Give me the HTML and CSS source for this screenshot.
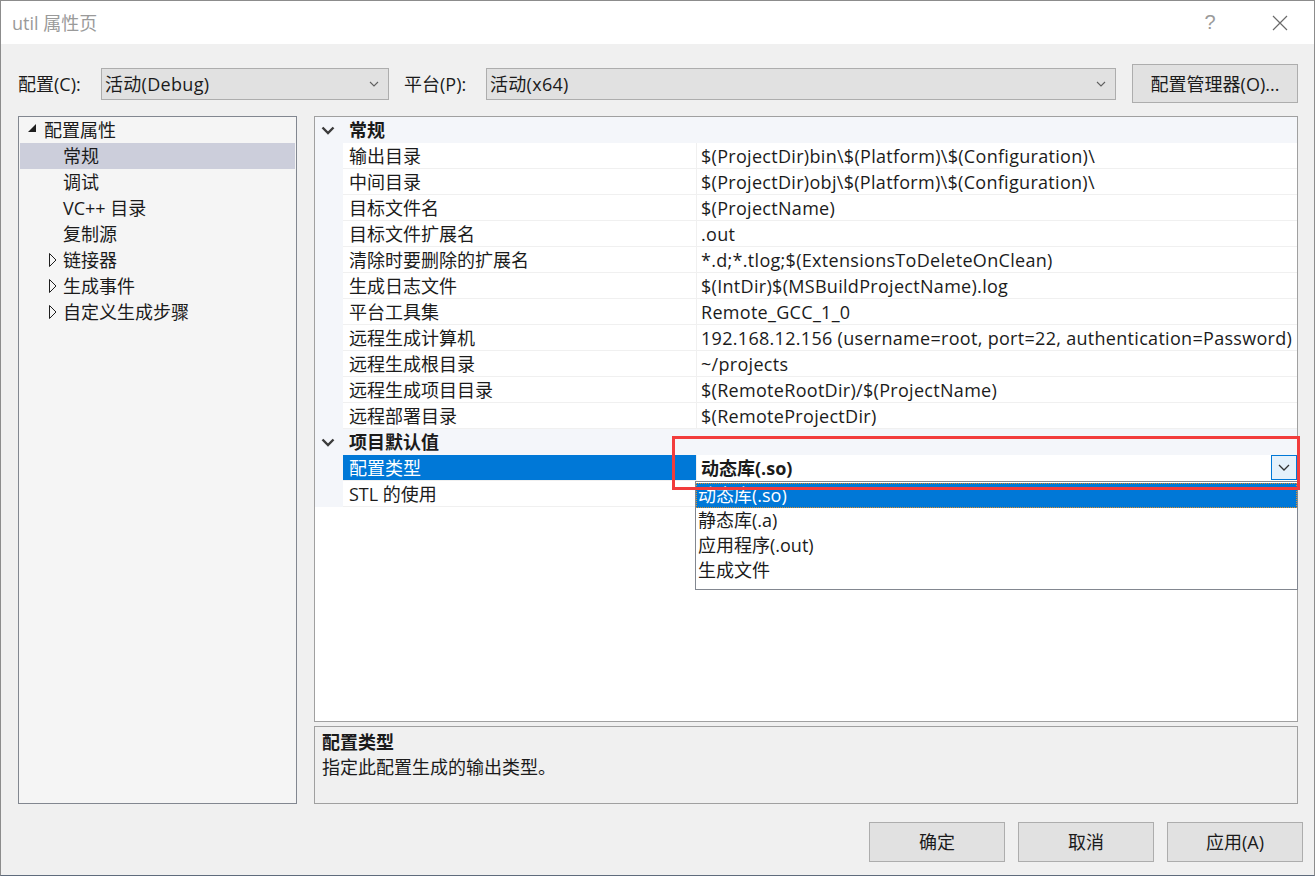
FILE: index.html
```html
<!DOCTYPE html>
<html lang="zh-CN">
<head>
  <meta charset="UTF-8" />
  <title>util 属性页</title>
  <link rel="stylesheet" href="styles.css">
</head>
<body>
  <div class="dialog">
    <div class="titlebar">
      <span class="title">util 属性页</span>
      <span class="tb-btn tb-help">?</span>
      <span class="tb-btn tb-close">
        <svg width="16" height="16" viewBox="0 0 16 16"><path d="M1 1 L15 15 M15 1 L1 15" stroke="#6a6a6a" stroke-width="1.2" fill="none"/></svg>
      </span>
    </div>

    <div class="content">
      <div class="config-row">
        <span class="lbl">配置(C):</span>
        <div class="combo combo-config">
          <span>活动(Debug)</span>
          <svg class="chev" width="10" height="6" viewBox="0 0 10 6"><path d="M1 1 L5 5 L9 1" stroke="#606060" stroke-width="1.1" fill="none"/></svg>
        </div>
        <span class="lbl lbl-platform">平台(P):</span>
        <div class="combo combo-platform">
          <span>活动(x64)</span>
          <svg class="chev" width="10" height="6" viewBox="0 0 10 6"><path d="M1 1 L5 5 L9 1" stroke="#606060" stroke-width="1.1" fill="none"/></svg>
        </div>
        <button class="btn btn-manager">配置管理器(O)...</button>
      </div>

      <div class="main">
        <div class="tree">
          <div class="node lvl0">
            <span class="exp"><svg width="9" height="9" viewBox="0 0 9 9"><path d="M8 0 L8 8 L0 8 Z" fill="#1e1e1e"/></svg></span>
            <span>配置属性</span>
          </div>
          <div class="node lvl1 selected"><span class="exp"></span><span>常规</span></div>
          <div class="node lvl1"><span class="exp"></span><span>调试</span></div>
          <div class="node lvl1"><span class="exp"></span><span>VC++ 目录</span></div>
          <div class="node lvl1"><span class="exp"></span><span>复制源</span></div>
          <div class="node lvl1">
            <span class="exp"><svg width="8" height="14" viewBox="0 0 8 14"><path d="M0.5 0.5 L7 7 L0.5 13.5 Z" fill="none" stroke="#1e1e1e" stroke-width="1"/></svg></span>
            <span>链接器</span>
          </div>
          <div class="node lvl1">
            <span class="exp"><svg width="8" height="14" viewBox="0 0 8 14"><path d="M0.5 0.5 L7 7 L0.5 13.5 Z" fill="none" stroke="#1e1e1e" stroke-width="1"/></svg></span>
            <span>生成事件</span>
          </div>
          <div class="node lvl1">
            <span class="exp"><svg width="8" height="14" viewBox="0 0 8 14"><path d="M0.5 0.5 L7 7 L0.5 13.5 Z" fill="none" stroke="#1e1e1e" stroke-width="1"/></svg></span>
            <span>自定义生成步骤</span>
          </div>
        </div>

        <div class="right">
          <div class="grid">
            <div class="cat">
              <span class="cat-chev"><svg width="14" height="9" viewBox="0 0 14 9"><path d="M1.5 1.5 L7 7 L12.5 1.5" stroke="#3c3c3c" stroke-width="2.4" fill="none"/></svg></span>
              <span>常规</span>
            </div>
            <div class="prop"><span class="gutter"></span><span class="name">输出目录</span><span class="value">$(ProjectDir)bin\$(Platform)\$(Configuration)\</span></div>
            <div class="prop"><span class="gutter"></span><span class="name">中间目录</span><span class="value">$(ProjectDir)obj\$(Platform)\$(Configuration)\</span></div>
            <div class="prop"><span class="gutter"></span><span class="name">目标文件名</span><span class="value">$(ProjectName)</span></div>
            <div class="prop"><span class="gutter"></span><span class="name">目标文件扩展名</span><span class="value">.out</span></div>
            <div class="prop"><span class="gutter"></span><span class="name">清除时要删除的扩展名</span><span class="value">*.d;*.tlog;$(ExtensionsToDeleteOnClean)</span></div>
            <div class="prop"><span class="gutter"></span><span class="name">生成日志文件</span><span class="value">$(IntDir)$(MSBuildProjectName).log</span></div>
            <div class="prop"><span class="gutter"></span><span class="name">平台工具集</span><span class="value">Remote_GCC_1_0</span></div>
            <div class="prop"><span class="gutter"></span><span class="name">远程生成计算机</span><span class="value">192.168.12.156 (username=root, port=22, authentication=Password)</span></div>
            <div class="prop"><span class="gutter"></span><span class="name">远程生成根目录</span><span class="value">~/projects</span></div>
            <div class="prop"><span class="gutter"></span><span class="name">远程生成项目目录</span><span class="value">$(RemoteRootDir)/$(ProjectName)</span></div>
            <div class="prop"><span class="gutter"></span><span class="name">远程部署目录</span><span class="value">$(RemoteProjectDir)</span></div>

            <div class="cat">
              <span class="cat-chev"><svg width="14" height="9" viewBox="0 0 14 9"><path d="M1.5 1.5 L7 7 L12.5 1.5" stroke="#3c3c3c" stroke-width="2.4" fill="none"/></svg></span>
              <span>项目默认值</span>
            </div>
            <div class="prop selected">
              <span class="gutter"></span>
              <span class="name">配置类型</span>
              <span class="value editing">
                <span class="edit-text">动态库(.so)</span>
                <span class="drop-btn"><svg width="12" height="7" viewBox="0 0 12 7"><path d="M1 1 L6 6 L11 1" stroke="#333" stroke-width="1.3" fill="none"/></svg></span>
                <div class="listbox">
                  <div class="opt active">动态库(.so)</div>
                  <div class="opt">静态库(.a)</div>
                  <div class="opt">应用程序(.out)</div>
                  <div class="opt">生成文件</div>
                </div>
              </span>
            </div>
            <div class="prop"><span class="gutter"></span><span class="name">STL 的使用</span><span class="value"></span></div>
          </div>

          <div class="desc">
            <div class="desc-title">配置类型</div>
            <div class="desc-text">指定此配置生成的输出类型。</div>
          </div>
        </div>
      </div>

      <div class="footer">
        <button class="btn">确定</button>
        <button class="btn">取消</button>
        <button class="btn">应用(A)</button>
      </div>
    </div>

    <div class="highlight-box"></div>
  </div>
</body>
</html>
```

FILE: styles.css
```css
* {
  margin: 0;
  padding: 0;
  box-sizing: border-box;
}

body {
  background: #f0f0f0;
  font-family: "Open Sans", "Noto Sans CJK SC", sans-serif;
  font-size: 18px;
  color: #1b1b1b;
}

.dialog {
  position: relative;
  width: 1315px;
  height: 876px;
  border: 1px solid #8c8c8c;
  border-bottom-color: #5f6b7c;
  background: #f0f0f0;
  display: flex;
  flex-direction: column;
}

/* title bar */
.titlebar {
  height: 43px;
  background: #fff;
  display: flex;
  align-items: center;
  padding-left: 11px;
}

.title {
  flex: 1;
  color: #9a9a9a;
  line-height: 24px;
}

.tb-btn {
  width: 68px;
  height: 43px;
  display: flex;
  align-items: center;
  justify-content: center;
}

.tb-help {
  margin-right: 2px;
  color: #9a9a9a;
  font-family: "Liberation Sans", sans-serif;
  font-weight: 300;
  font-size: 20px;
}

/* content */
.content {
  flex: 1;
  padding: 20px 16px 13px 17px;
  display: flex;
  flex-direction: column;
}

.config-row {
  height: 39px;
  display: flex;
  align-items: center;
}

.lbl {
  width: 83px;
  line-height: 24px;
}

.lbl-platform {
  width: 82px;
  margin-left: 15px;
}

.combo {
  height: 32px;
  border: 1px solid #adadad;
  background: #e1e1e1;
  display: flex;
  align-items: center;
  justify-content: space-between;
  padding: 0 9px 0 3px;
  line-height: 24px;
  letter-spacing: 0.3px;
}

.combo-config {
  width: 288px;
}

.combo-platform {
  width: 630px;
}

.btn {
  height: 40px;
  width: 136px;
  border: 1px solid #adadad;
  background: #e1e1e1;
  font-family: inherit;
  font-size: 18px;
  color: #1b1b1b;
  line-height: 24px;
}

.btn-manager {
  width: 166px;
  height: 39px;
  margin-left: 16px;
}

.main {
  margin-top: 13px;
  height: 688px;
  display: flex;
  gap: 17px;
}

/* tree */
.tree {
  width: 279px;
  border: 1px solid #828790;
  background: #f5f5f5;
  padding: 0 1px;
}

.node {
  height: 26px;
  display: flex;
  align-items: center;
  line-height: 24px;
}

.node .exp {
  width: 16px;
  height: 26px;
  display: flex;
  align-items: center;
}

.lvl0 {
  padding-left: 8px;
}

.lvl0 .exp {
  padding-bottom: 3px;
}

.lvl1 {
  padding-left: 27px;
}

.lvl1 .exp {
  padding-left: 2px;
}

.node.selected {
  background: #cccedb;
}

/* property grid */
.right {
  flex: 1;
  display: flex;
  flex-direction: column;
  gap: 4px;
}

.grid {
  height: 606px;
  border: 1px solid #a0a0a0;
  background: #fff;
}

.cat {
  height: 26px;
  background: #f4f6fa;
  display: flex;
  align-items: center;
  font-weight: bold;
  line-height: 24px;
}

.cat-chev {
  width: 34px;
  padding-left: 6px;
  display: flex;
  align-items: center;
}

.prop {
  height: 26px;
  display: flex;
}

.gutter {
  width: 28px;
  background: #f4f6fa;
}

.name {
  width: 353px;
  padding: 1px 0 0 6px;
  line-height: 24px;
  border-bottom: 1px solid #f0f0f0;
}

.value {
  flex: 1;
  padding: 1px 0 0 4px;
  line-height: 24px;
  border-left: 1px solid #f0f0f0;
  border-bottom: 1px solid #f0f0f0;
  white-space: nowrap;
  letter-spacing: 0.3px;
}

.prop.selected .name {
  background: #0078d7;
  color: #fff;
}

.value.editing {
  position: relative;
  display: flex;
  align-items: center;
  justify-content: space-between;
  padding: 0 0 0 4px;
  border-bottom: none;
  letter-spacing: 0;
}

.edit-text {
  font-weight: bold;
}

.drop-btn {
  width: 26px;
  height: 25px;
  border: 1px solid #0078d7;
  background: #e5f1fb;
  display: flex;
  align-items: center;
  justify-content: center;
  align-self: flex-start;
}

.listbox {
  position: absolute;
  left: -2px;
  top: 26px;
  width: 603px;
  height: 109px;
  border: 1px solid #828790;
  background: #fff;
  padding-top: 1px;
  z-index: 2;
  font-weight: normal;
}

.opt {
  height: 25px;
  line-height: 25px;
  padding-left: 2px;
}

.opt.active {
  background: #0078d7;
  color: #fff;
  outline: 1px dotted #e0902a;
  outline-offset: -1px;
}

/* description */
.desc {
  height: 78px;
  border: 1px solid #a0a0a0;
  background: #f0f0f0;
  padding: 3px 7px 0;
  line-height: 25px;
}

.desc-title {
  font-weight: bold;
}

/* footer */
.footer {
  margin-top: 18px;
  margin-right: -5px;
  display: flex;
  justify-content: flex-end;
  gap: 13px;
}

/* red annotation frame */
.highlight-box {
  position: absolute;
  left: 671px;
  top: 435px;
  width: 628px;
  height: 54px;
  border: 3px solid #f23c3c;
  z-index: 3;
}
```
